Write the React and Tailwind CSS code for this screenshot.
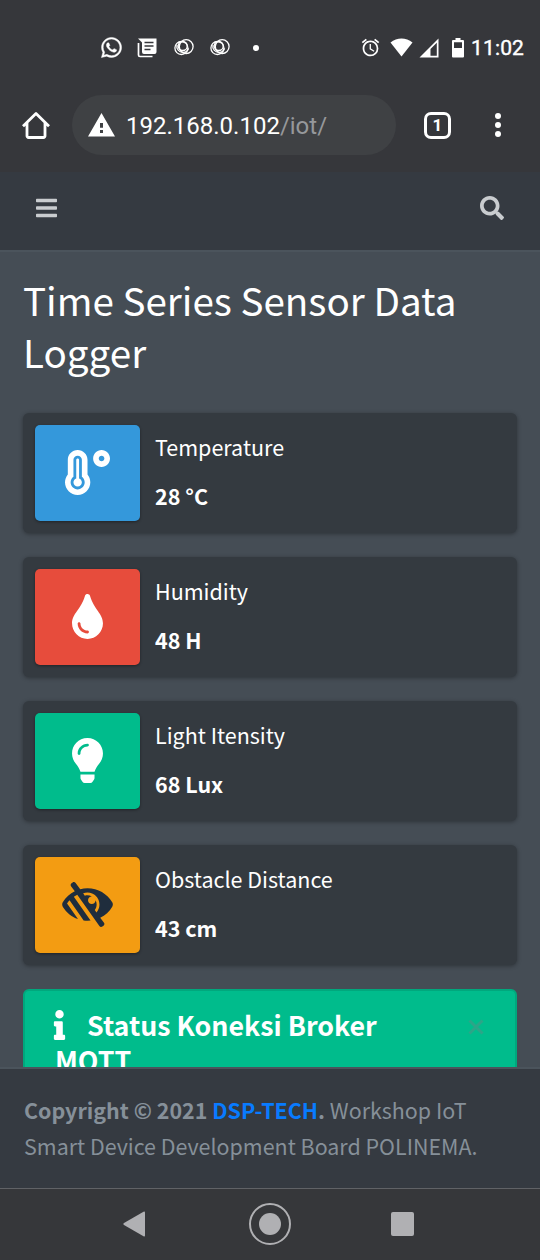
import { FaBars, FaSearch, FaTint, FaLightbulb, FaLowVision, FaInfo, FaTemperatureHigh, FaWhatsapp } from "react-icons/fa";
import { MdAlarm } from "react-icons/md";

const sensors = [
  { label: "Temperature", value: "28 °C", Icon: FaTemperatureHigh, tile: "bg-[#3498db] text-white" },
  { label: "Humidity", value: "48 H", Icon: FaTint, tile: "bg-[#e74c3c] text-white" },
  { label: "Light Itensity", value: "68 Lux", Icon: FaLightbulb, tile: "bg-[#00bc8c] text-white" },
  { label: "Obstacle Distance", value: "43 cm", Icon: FaLowVision, tile: "bg-[#f39c12] text-[#1f2d3d]" },
];

function Rings() {
  return (
    <svg className="h-5 w-5" viewBox="0 0 20 20" fill="none" stroke="currentColor" strokeWidth="1.3">
      <circle cx="12.200" cy="8.600" r="6.900" />
      <circle cx="7.400" cy="10" r="6.500" />
      <circle cx="8.700" cy="8" r="4.500" />
      <path d="M3 7a6 6 0 0 0 6 7.400a6 6 0 0 0 5.600-4" />
    </svg>
  );
}

function StatusBar() {
  return (
    <div className="flex h-[95px] items-center text-white">
      <FaWhatsapp className="ml-[100px] h-[23px] w-[23px]" stroke="currentColor" strokeWidth="10" />
      <svg className="ml-[14px] h-[20px] w-[20px]" viewBox="0 0 20 20" fill="currentColor">
        <path d="M1 .5h18.500V14a2 2 0 0 1-2 2H7a2 2 0 0 1-2-2V4.500z" />
        <path d="M1.500 5V17a1.500 1.500 0 0 0 1.500 1.500H15.500" fill="none" stroke="currentColor" strokeWidth="1.700" />
        <path d="M7.500 4.500h9M7.500 8h9M7.500 11.500h6" stroke="#36373b" strokeWidth="1.500" />
      </svg>
      <div className="ml-[17px]"><Rings /></div>
      <div className="ml-[16px]"><Rings /></div>
      <span className="ml-[23px] h-[6px] w-[6px] rounded-full bg-white" />
      <MdAlarm className="ml-[101px] h-[21px] w-[21px]" />
      <svg className="ml-[9px] h-[19px] w-[23px]" viewBox="0 0 23 19" fill="currentColor">
        <path d="M.5 4.500C7-1 16-1 22.500 4.500L11.500 18.500z" />
      </svg>
      <svg className="ml-[6px] h-[20px] w-[20px]" viewBox="0 0 20 20" fill="currentColor">
        <path fillRule="evenodd" d="M.5 19.500L19.500.5v19zM11.500 11v6.800h6.300V4.700z" />
      </svg>
      <svg className="ml-[13px] h-[20px] w-[12px]" viewBox="0 0 12 20" fill="currentColor">
        <path fillRule="evenodd" d="M3.500 0h5v2H11a1 1 0 0 1 1 1v15.500a1 1 0 0 1-1 1H1a1 1 0 0 1-1-1V3a1 1 0 0 1 1-1h2.500zM2 4.200V10h8V4.200z" />
      </svg>
      <span className="ml-[7px] font-[Roboto] text-[21px] leading-[24px] tracking-[0.15px] whitespace-nowrap [-webkit-text-stroke:0.4px_white]">11:02</span>
    </div>
  );
}

function AddressBar() {
  return (
    <div className="flex h-[60px] items-center text-white">
      <svg className="ml-[21px] h-[28px] w-[29px]" viewBox="0 0 29 28" fill="none" stroke="currentColor" strokeWidth="2.800" strokeLinejoin="round">
        <path d="M2 15.200L15 2.500l13 12.700M6 12V25a1.500 1.500 0 0 0 1.500 1.500H22.500a1.500 1.500 0 0 0 1.500-1.500V12" />
      </svg>
      <div className="ml-[22px] flex h-[60px] w-[324px] items-center rounded-full bg-[#3f4144]">
        <svg className="ml-[16px] h-[24px] w-[27px]" viewBox="0 0 27 24" fill="currentColor">
          <path fillRule="evenodd" d="M13.500 0L27 23.500H0zM12 10v4.800h3V10zM12 17v3h3v-3z" />
        </svg>
        <span className="ml-[11px] pt-[2px] font-[Roboto] text-[24px] leading-[30px]">192.168.0.102<span className="text-[#96989b]">/iot/</span></span>
      </div>
      <div className="ml-[28px] flex h-[27px] w-[27px] items-center justify-center rounded-[7px] border-[3px] border-white pt-px font-[Roboto] text-[17px] leading-none font-bold">1</div>
      <div className="ml-[44px] flex flex-col gap-[3px]">
        <span className="h-[6px] w-[6px] rounded-full bg-white" />
        <span className="h-[6px] w-[6px] rounded-full bg-white" />
        <span className="h-[6px] w-[6px] rounded-full bg-white" />
      </div>
    </div>
  );
}

function SensorCard({ label, value, Icon, tile }) {
  return (
    <div className="flex h-[120px] rounded-[6px] bg-[#343a40] p-3 shadow-[0_1px_4px_rgba(0,0,0,0.35)]">
      <div className={`flex h-24 w-[105px] items-center justify-center rounded-[5px] pb-[2px] shadow-[0_1px_3px_rgba(0,0,0,0.4)] ${tile}`}>
        <Icon className="h-[45px] w-[51px]" />
      </div>
      <div className="ml-[15px] flex flex-col gap-[13px] pt-[4px] text-white">
        <span className="text-[21.500px] leading-9">{label}</span>
        <span className="text-[21.500px] leading-9 font-bold">{value}</span>
      </div>
    </div>
  );
}

export default function App() {
  return (
    <div className="flex h-[1260px] w-[540px] flex-col overflow-hidden bg-[#36373b] font-['Noto_Sans_CJK_SC',sans-serif]">
      <header className="h-[172px] shrink-0">
        <StatusBar />
        <AddressBar />
      </header>
      <nav className="flex h-[80px] shrink-0 items-start justify-between border-b-2 border-[#4b545c] bg-[#353a41] pr-9 pl-[35px] pt-6 text-[#c9cccf]">
        <FaBars className="h-6 w-[23px]" />
        <FaSearch className="h-6 w-6" />
      </nav>
      <main className="flex min-h-0 flex-1 flex-col overflow-hidden bg-[#454d55] px-[23px] pt-[21px]">
        <h1 className="h-[140px] shrink-0 text-[38.600px] leading-[52px] text-white">Time Series Sensor Data<br />Logger</h1>
        <section className="flex shrink-0 flex-col gap-6">
          {sensors.map((s) => <SensorCard key={s.label} {...s} />)}
        </section>
        <div className="mt-6 flex h-[150px] shrink-0 items-start rounded-[6px] border-2 border-[#00a87d] bg-[#00bc8c] pt-[16px] pr-[31px] pl-[30px] text-white">
          <h5 className="flex-1 text-[26.800px] leading-[35px] font-bold whitespace-nowrap">
            <FaInfo className="mr-[21px] -ml-[2px] inline-block h-[30px] w-[13px] align-[-4px]" />Status Koneksi Broker<br />MQTT
          </h5>
          <svg className="mt-[12px] h-[16px] w-[16px] text-[#2ca588]" viewBox="0 0 16 16" stroke="currentColor" strokeWidth="3">
            <path d="M1.500 1.500l13 13M14.500 1.500l-13 13" />
          </svg>
        </div>
      </main>
      <footer className="h-[121px] shrink-0 border-t-2 border-[#4b545c] bg-[#353a41] px-6 pt-[23px] text-[21.450px] leading-9 whitespace-nowrap text-[#869099]">
        <strong className="font-bold">Copyright © 2021 <a className="text-[#087bff]">DSP-TECH</a>.</strong> Workshop IoT<br />Smart Device Development Board POLINEMA.
      </footer>
      <div className="flex h-[72px] shrink-0 items-center border-t border-[#606266] bg-[#36373a] pb-[2px] text-[#b0b0b3]">
        <svg className="ml-[123px] h-[26px] w-[23px]" viewBox="0 0 23 26" fill="currentColor">
          <path d="M1 12L20.500.7Q22 0 22 1.500V24.500Q22 26 20.500 25.300L1 14Q-.3 13 1 12z" />
        </svg>
        <div className="ml-[103px] flex h-[42px] w-[42px] items-center justify-center rounded-full border-2 border-[#b0b0b3]">
          <span className="h-[22px] w-[22px] rounded-full bg-[#b0b0b3]" />
        </div>
        <span className="ml-[100px] h-[24px] w-[23px] rounded-[2px] bg-[#b0b0b3]" />
      </div>
    </div>
  );
}
